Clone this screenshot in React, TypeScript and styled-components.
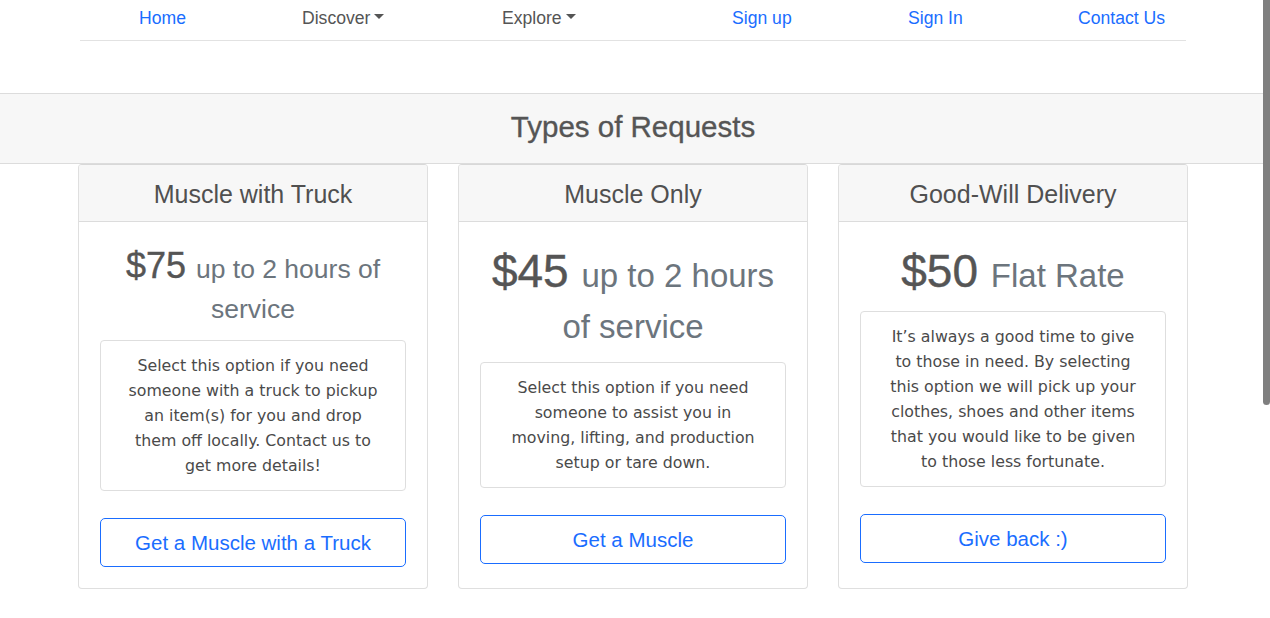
import React from "react"
import styled, { createGlobalStyle } from "styled-components"

const GlobalStyle = createGlobalStyle`
  html, body {
    margin: 0;
    padding: 0;
    background: #fff;
    overflow: hidden;
  }
  body {
    font-family: "Liberation Sans", Arial, Helvetica, sans-serif;
    color: #555;
  }
  * {
    box-sizing: border-box;
  }
`

const Page = styled.div`
  padding-right: 4px;
  min-height: 618px;
`

const NavBar = styled.nav`
  width: 1106px;
  margin: 0 auto;
  border-bottom: 1px solid #e2e2e2;
`

const NavList = styled.ul`
  display: grid;
  grid-template-columns: 163px 200px 230px 176px 170px auto;
  list-style: none;
  margin: 0;
  padding: 8px 0 0 59px;
  height: 40px;
`

const NavItem = styled.li`
  white-space: nowrap;
`

const NavLink = styled.a<{ $muted?: boolean }>`
  display: inline-flex;
  align-items: center;
  font-size: 17.6px;
  line-height: 20px;
  color: ${(p) => (p.$muted ? "#555" : "#1a6dff")};
  text-decoration: none;
  cursor: pointer;
`

const Caret = styled.span`
  display: inline-block;
  margin-left: 4px;
  margin-top: -3px;
  border-top: 5px solid #555;
  border-left: 5px solid transparent;
  border-right: 5px solid transparent;
`

const Band = styled.header`
  margin: 52px -4px 0 0;
  height: 71px;
  background: #f7f7f7;
  border-top: 1px solid #dcdcdc;
  border-bottom: 1px solid #dcdcdc;
  display: flex;
  align-items: center;
  justify-content: center;
  padding: 0 4px 4px 0;
`

const Heading = styled.h3`
  margin: 0;
  font-size: 29.5px;
  line-height: 34px;
  font-weight: 400;
  color: #555;
  -webkit-text-stroke: 0.35px #555;
`

const Cards = styled.section`
  width: 1110px;
  margin: 0 auto;
  display: grid;
  grid-template-columns: repeat(3, 350px);
  gap: 30px;
`

const Card = styled.article`
  display: flex;
  flex-direction: column;
  border: 1px solid #dfdfdf;
  border-top-color: #d8d8d8;
  border-radius: 4px;
  background: #fff;
`

const CardHeader = styled.div`
  background: #f7f7f7;
  border-bottom: 1px solid #dcdcdc;
  padding: 14px 10px;
  text-align: center;
  border-radius: 3px 3px 0 0;
`

const CardTitle = styled.h4`
  margin: 0;
  font-size: 25px;
  line-height: 28px;
  font-weight: 400;
  color: #505050;
  position: relative;
  top: 1px;
`

const CardBody = styled.div`
  padding: 24px 21px 21px;
  display: flex;
  flex-direction: column;
  text-align: center;
`

const Price = styled.h2<{ $large?: boolean }>`
  margin: 0 0 14px;
  font-weight: 400;
  font-size: ${(p) => (p.$large ? "46px" : "36px")};
  line-height: ${(p) => (p.$large ? "51px" : "40px")};
  color: #555;
  -webkit-text-stroke: 0.4px #555;
`

const Muted = styled.small<{ $large?: boolean }>`
  font-size: ${(p) => (p.$large ? "33px" : "26.5px")};
  line-height: 1;
  color: #6c757d;
  -webkit-text-stroke: 0;
`

const Description = styled.p`
  margin: 0 0 27px;
  padding: 12px 23px;
  border: 1px solid #dedede;
  border-radius: 4px;
  font-family: "DejaVu Sans", Verdana, sans-serif;
  font-size: 15.8px;
  line-height: 25px;
  color: #4a4a4a;
`

const Action = styled.button`
  width: 100%;
  height: 49px;
  padding: 0 16px;
  border: 1px solid #1a6dff;
  border-radius: 5px;
  background: #fff;
  color: #1a6dff;
  font-family: "Liberation Sans", Arial, sans-serif;
  font-size: 20.5px;
  cursor: pointer;
`

const ScrollThumb = styled.div`
  position: fixed;
  top: 0;
  right: 0;
  width: 7px;
  height: 405px;
  border-radius: 0 0 4px 4px;
  background: #7f7f7f;
`

interface Plan {
  title: string
  price: string
  note: string
  large?: boolean
  text: string
  action: string
}

const plans: Plan[] = [
  {
    title: "Muscle with Truck",
    price: "$75",
    note: "up to 2 hours of service",
    text: "Select this option if you need someone with a truck to pickup an item(s) for you and drop them off locally. Contact us to get more details!",
    action: "Get a Muscle with a Truck",
  },
  {
    title: "Muscle Only",
    price: "$45",
    note: "up to 2 hours of service",
    large: true,
    text: "Select this option if you need someone to assist you in moving, lifting, and production setup or tare down.",
    action: "Get a Muscle",
  },
  {
    title: "Good-Will Delivery",
    price: "$50",
    note: "Flat Rate",
    large: true,
    text: "It\u2019s always a good time to give to those in need. By selecting this option we will pick up your clothes, shoes and other items that you would like to be given to those less fortunate.",
    action: "Give back :)",
  },
]

const App: React.FC = () => {
  return (
    <Page>
      <GlobalStyle />
      <NavBar>
        <NavList>
          <NavItem>
            <NavLink>Home</NavLink>
          </NavItem>
          <NavItem>
            <NavLink $muted>
              Discover
              <Caret />
            </NavLink>
          </NavItem>
          <NavItem>
            <NavLink $muted>
              Explore
              <Caret />
            </NavLink>
          </NavItem>
          <NavItem>
            <NavLink>Sign up</NavLink>
          </NavItem>
          <NavItem>
            <NavLink>Sign In</NavLink>
          </NavItem>
          <NavItem>
            <NavLink>Contact Us</NavLink>
          </NavItem>
        </NavList>
      </NavBar>

      <Band>
        <Heading>Types of Requests</Heading>
      </Band>

      <Cards>
        {plans.map((plan) => (
          <Card key={plan.title}>
            <CardHeader>
              <CardTitle>{plan.title}</CardTitle>
            </CardHeader>
            <CardBody>
              <Price $large={plan.large}>
                {plan.price} <Muted $large={plan.large}>{plan.note}</Muted>
              </Price>
              <Description>{plan.text}</Description>
              <Action>{plan.action}</Action>
            </CardBody>
          </Card>
        ))}
      </Cards>
      <ScrollThumb />
    </Page>
  )
}

export default App
